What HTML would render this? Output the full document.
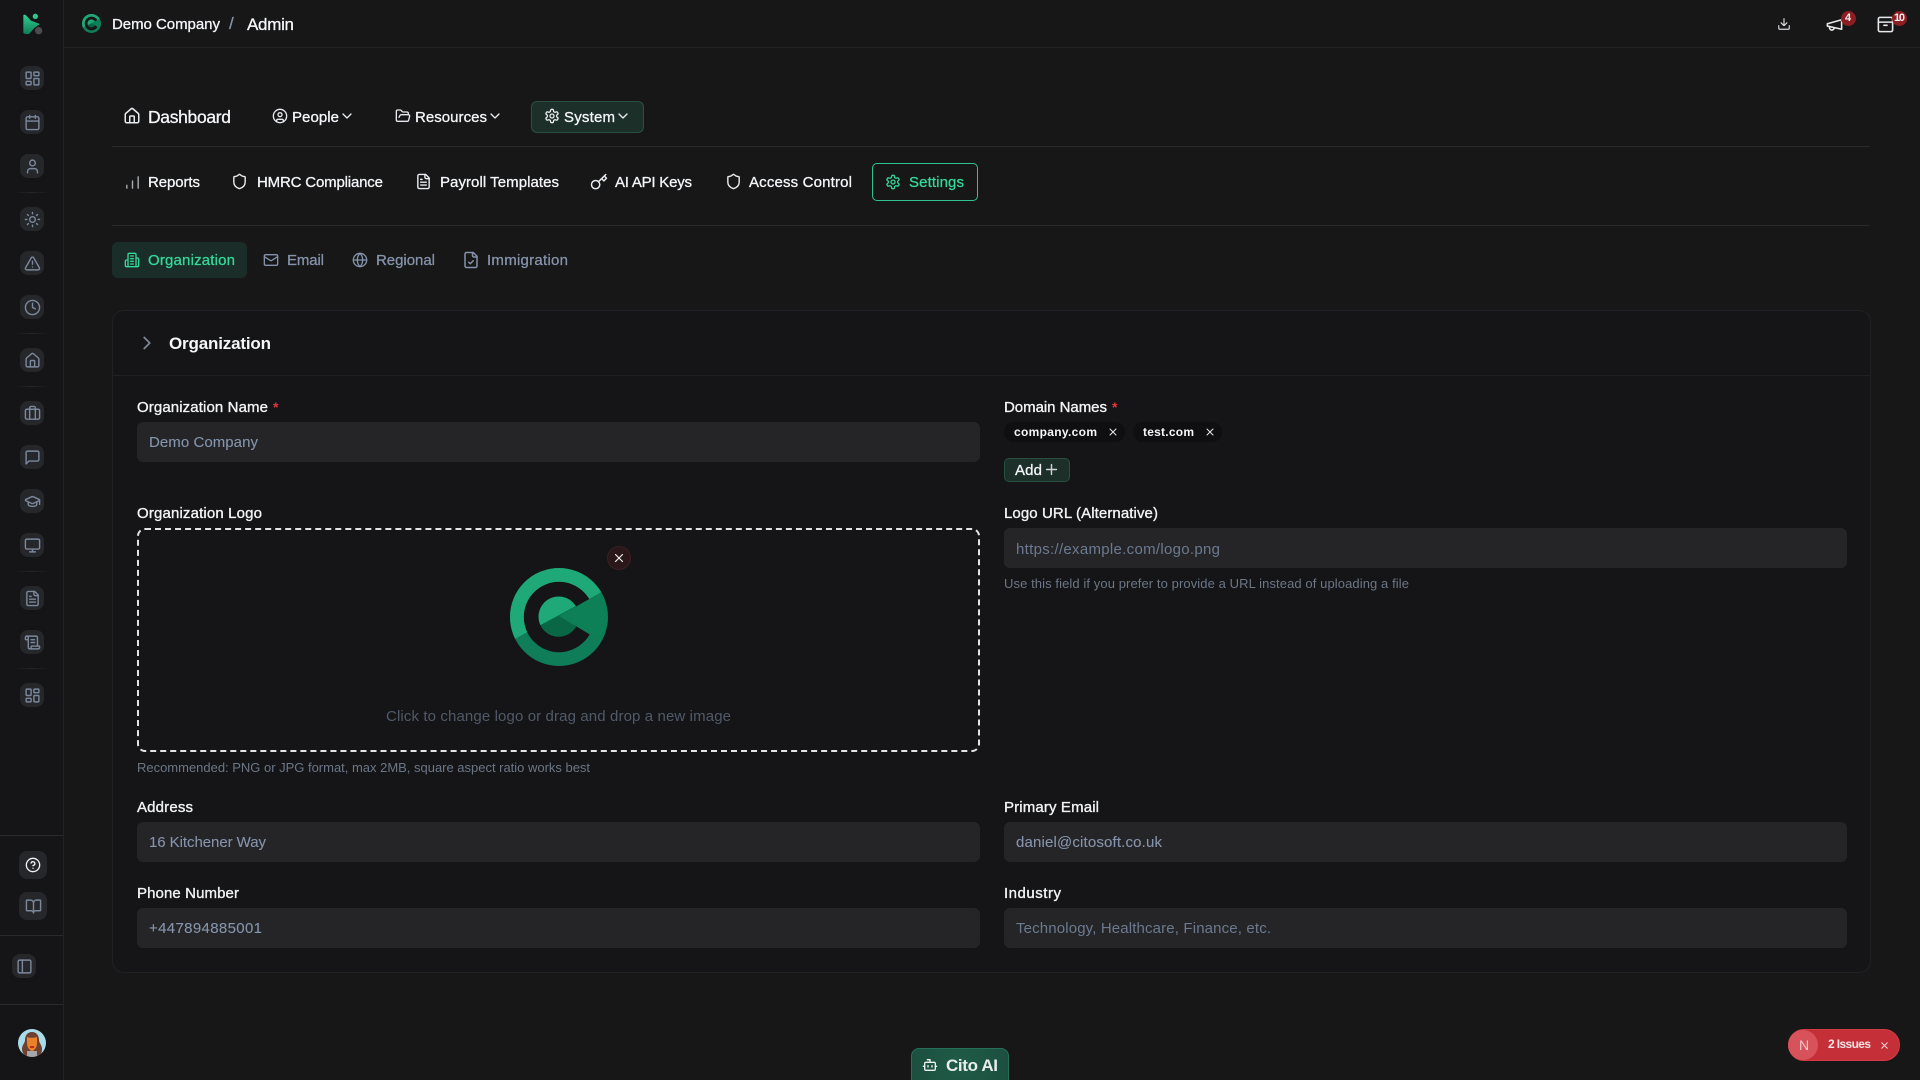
<!DOCTYPE html>
<html lang="en">
<head>
<meta charset="utf-8">
<title>Settings - Organization</title>
<style>
*{box-sizing:border-box}
html,body{margin:0;padding:0;width:1920px;height:1080px;overflow:hidden;background:#171717;font-family:"Liberation Sans",sans-serif;color:#f4f6f9}
.a{position:absolute}
.t{position:absolute;white-space:nowrap;line-height:20px;height:20px;font-size:15px;-webkit-text-stroke:.3px currentColor}
.t:not([style*="font-size"]):not(.h){margin-top:1px}
.w{color:#f4f6f9}.m{color:#8493ab}.g{color:#34d89a}.h{color:#6b7687;font-size:13px;-webkit-text-stroke:0}
.p{color:#6b7a90;-webkit-text-stroke:0}.v{color:#8595ad;-webkit-text-stroke:.1px currentColor}
.l{color:#f1f3f6;-webkit-text-stroke:.35px #f1f3f6}
.b{font-weight:700;-webkit-text-stroke:0}
svg.i{position:absolute;fill:none;stroke:currentColor;stroke-width:2;stroke-linecap:round;stroke-linejoin:round;overflow:visible}
.sb{position:absolute;width:24px;height:24px;left:20px;background:#26272b;border-radius:8px;color:#7b889c}
.sb svg{left:3.5px;top:3.5px;width:17px;height:17px}
.div{position:absolute;left:14px;width:36px;height:1px;background:linear-gradient(90deg,transparent,#252629,transparent)}
.input{position:absolute;background:#252527;border-radius:6px;height:40px;width:843px}
.hr{position:absolute;height:1px;background:#2a2a2c}
.chip{position:absolute;height:20px;top:422px;background:#0f0f11;border-radius:10px}
</style>
</head>
<body>
<svg width="0" height="0" style="position:absolute">
<defs>
<symbol id="home" viewBox="0 0 24 24"><path d="M3 10a2 2 0 0 1 .7-1.5l7-6a2 2 0 0 1 2.6 0l7 6A2 2 0 0 1 21 10v9a2 2 0 0 1-2 2H5a2 2 0 0 1-2-2z"/><path d="M15 21v-8a1 1 0 0 0-1-1h-4a1 1 0 0 0-1 1v8"/></symbol>
<symbol id="dash" viewBox="0 0 24 24"><rect x="3" y="3" width="7" height="9" rx="1"/><rect x="14" y="3" width="7" height="5" rx="1"/><rect x="14" y="12" width="7" height="9" rx="1"/><rect x="3" y="16" width="7" height="5" rx="1"/></symbol>
<symbol id="cal" viewBox="0 0 24 24"><path d="M8 2v4M16 2v4"/><rect x="3" y="4" width="18" height="18" rx="2"/><path d="M3 10h18"/></symbol>
<symbol id="user" viewBox="0 0 24 24"><path d="M19 21v-2a4 4 0 0 0-4-4H9a4 4 0 0 0-4 4v2"/><circle cx="12" cy="7" r="4"/></symbol>
<symbol id="sun" viewBox="0 0 24 24"><circle cx="12" cy="12" r="4"/><path d="M12 2v2M12 20v2M4.9 4.9l1.4 1.4M17.7 17.7l1.4 1.4M2 12h2M20 12h2M6.3 17.7l-1.4 1.4M19.1 4.9l-1.4 1.4"/></symbol>
<symbol id="alert" viewBox="0 0 24 24"><path d="M21.7 18 13.7 4a2 2 0 0 0-3.5 0l-8 14a2 2 0 0 0 1.8 3h16a2 2 0 0 0 1.7-3"/><path d="M12 9v4M12 17h.01"/></symbol>
<symbol id="clock" viewBox="0 0 24 24"><circle cx="12" cy="12" r="10"/><path d="M12 6v6l4 2"/></symbol>
<symbol id="brief" viewBox="0 0 24 24"><path d="M16 20V4a2 2 0 0 0-2-2h-4a2 2 0 0 0-2 2v16"/><rect x="2" y="6" width="20" height="14" rx="2"/></symbol>
<symbol id="msg" viewBox="0 0 24 24"><path d="M21 15a2 2 0 0 1-2 2H7l-4 4V5a2 2 0 0 1 2-2h14a2 2 0 0 1 2 2z"/></symbol>
<symbol id="cap" viewBox="0 0 24 24"><path d="M21.4 10.9a1 1 0 0 0 0-1.8L12.8 5.2a2 2 0 0 0-1.7 0L2.6 9.1a1 1 0 0 0 0 1.8l8.5 3.9a2 2 0 0 0 1.7 0z"/><path d="M22 10v6M6 12.5V16a6 3 0 0 0 12 0v-3.5"/></symbol>
<symbol id="mon" viewBox="0 0 24 24"><rect x="2" y="3" width="20" height="14" rx="2"/><path d="M8 21h8M12 17v4"/></symbol>
<symbol id="file" viewBox="0 0 24 24"><path d="M15 2H6a2 2 0 0 0-2 2v16a2 2 0 0 0 2 2h12a2 2 0 0 0 2-2V7z"/><path d="M14 2v4a2 2 0 0 0 2 2h4M10 9H8M16 13H8M16 17H8"/></symbol>
<symbol id="filec" viewBox="0 0 24 24"><path d="M15 2H6a2 2 0 0 0-2 2v16a2 2 0 0 0 2 2h12a2 2 0 0 0 2-2V7z"/><path d="M14 2v4a2 2 0 0 0 2 2h4M9 15l2 2 4-4"/></symbol>
<symbol id="scroll" viewBox="0 0 24 24"><path d="M15 12h-5M15 8h-5M19 17V5a2 2 0 0 0-2-2H4"/><path d="M8 21h12a2 2 0 0 0 2-2v-1a1 1 0 0 0-1-1H11a1 1 0 0 0-1 1v1a2 2 0 1 1-4 0V5a2 2 0 1 0-4 0v2a1 1 0 0 0 1 1h3"/></symbol>
<symbol id="help" viewBox="0 0 24 24"><circle cx="12" cy="12" r="10"/><path d="M9.1 9a3 3 0 0 1 5.8 1c0 2-3 3-3 3M12 17h.01"/></symbol>
<symbol id="book" viewBox="0 0 24 24"><path d="M12 7v14"/><path d="M3 18a1 1 0 0 1-1-1V4a1 1 0 0 1 1-1h5a4 4 0 0 1 4 4 4 4 0 0 1 4-4h5a1 1 0 0 1 1 1v13a1 1 0 0 1-1 1h-6a3 3 0 0 0-3 3 3 3 0 0 0-3-3z"/></symbol>
<symbol id="panel" viewBox="0 0 24 24"><rect x="3" y="3" width="18" height="18" rx="2"/><path d="M9 3v18"/></symbol>
<symbol id="dl" viewBox="0 0 24 24"><path d="M12 3v12M7 10l5 5 5-5"/><path d="M21 15v4a2 2 0 0 1-2 2H5a2 2 0 0 1-2-2v-4"/></symbol>
<symbol id="mega" viewBox="0 0 24 24"><path d="m3 11 18-5v12L3 14z"/><path d="M11.6 16.8a3 3 0 1 1-5.8-1.6"/></symbol>
<symbol id="box" viewBox="0 0 24 24"><rect x="3" y="3" width="18" height="18" rx="2"/><path d="M3 9h18M10 13h4"/></symbol>
<symbol id="bld" viewBox="0 0 24 24"><path d="M6 22V4a2 2 0 0 1 2-2h8a2 2 0 0 1 2 2v18z"/><path d="M6 12H4a2 2 0 0 0-2 2v6a2 2 0 0 0 2 2h2M18 9h2a2 2 0 0 1 2 2v9a2 2 0 0 1-2 2h-2M10 6h4M10 10h4M10 14h4M10 18h4"/></symbol>
<symbol id="mail" viewBox="0 0 24 24"><rect x="2" y="4" width="20" height="16" rx="2"/><path d="m22 7-8.97 5.7a1.94 1.94 0 0 1-2.06 0L2 7"/></symbol>
<symbol id="globe" viewBox="0 0 24 24"><circle cx="12" cy="12" r="10"/><path d="M12 2a14.5 14.5 0 0 0 0 20 14.5 14.5 0 0 0 0-20M2 12h20"/></symbol>
<symbol id="key" viewBox="0 0 24 24"><circle cx="7.5" cy="15.5" r="5.5"/><path d="m21 2-9.6 9.6M15.5 7.5l3 3L22 7l-3-3"/></symbol>
<symbol id="shield" viewBox="0 0 24 24"><path d="M20 13c0 5-3.5 7.5-7.66 8.95a1 1 0 0 1-.67-.01C7.5 20.5 4 18 4 13V6a1 1 0 0 1 1-1c2 0 4.5-1.2 6.24-2.72a1.17 1.17 0 0 1 1.52 0C14.51 3.81 17 5 19 5a1 1 0 0 1 1 1z"/></symbol>
<symbol id="gear" viewBox="0 0 24 24"><path d="M12.22 2h-.44a2 2 0 0 0-2 2v.18a2 2 0 0 1-1 1.73l-.43.25a2 2 0 0 1-2 0l-.15-.08a2 2 0 0 0-2.73.73l-.22.38a2 2 0 0 0 .73 2.73l.15.1a2 2 0 0 1 1 1.72v.51a2 2 0 0 1-1 1.74l-.15.09a2 2 0 0 0-.73 2.73l.22.38a2 2 0 0 0 2.73.73l.15-.08a2 2 0 0 1 2 0l.43.25a2 2 0 0 1 1 1.73V20a2 2 0 0 0 2 2h.44a2 2 0 0 0 2-2v-.18a2 2 0 0 1 1-1.73l.43-.25a2 2 0 0 1 2 0l.15.08a2 2 0 0 0 2.73-.73l.22-.39a2 2 0 0 0-.73-2.73l-.15-.08a2 2 0 0 1-1-1.74v-.5a2 2 0 0 1 1-1.74l.15-.09a2 2 0 0 0 .73-2.73l-.22-.38a2 2 0 0 0-2.73-.73l-.15.08a2 2 0 0 1-2 0l-.43-.25a2 2 0 0 1-1-1.73V4a2 2 0 0 0-2-2z"/><circle cx="12" cy="12" r="3"/></symbol>
<symbol id="bars" viewBox="0 0 24 24"><path d="M4 20v-4M12 20V10M20 20V4"/></symbol>
<symbol id="cuser" viewBox="0 0 24 24"><circle cx="12" cy="12" r="10"/><circle cx="12" cy="10" r="3"/><path d="M7 20.7V19a2 2 0 0 1 2-2h6a2 2 0 0 1 2 2v1.7"/></symbol>
<symbol id="folder" viewBox="0 0 24 24"><path d="m6 14 1.5-2.9A2 2 0 0 1 9.24 10H20a2 2 0 0 1 1.94 2.5l-1.54 6a2 2 0 0 1-1.95 1.5H4a2 2 0 0 1-2-2V5a2 2 0 0 1 2-2h3.9a2 2 0 0 1 1.69.9l.81 1.2a2 2 0 0 0 1.67.9H18a2 2 0 0 1 2 2v2"/></symbol>
<symbol id="chev" viewBox="0 0 24 24"><path d="m6 9 6 6 6-6"/></symbol>
<symbol id="chevr" viewBox="0 0 24 24"><path d="m9 18 6-6-6-6"/></symbol>
<symbol id="x" viewBox="0 0 24 24"><path d="M18 6 6 18M6 6l12 12"/></symbol>
<symbol id="plus" viewBox="0 0 24 24"><path d="M5 12h14M12 5v14"/></symbol>
<symbol id="bot" viewBox="0 0 24 24"><path d="M12 8V4H8"/><rect x="4" y="8" width="16" height="12" rx="2"/><path d="M2 14h2M20 14h2M15 13v2M9 13v2"/></symbol>
<symbol id="clogo" viewBox="0 0 292 292">
  <defs>
    <clipPath id="upper"><path d="M-30 235 346 33V-20H-30z"/></clipPath>
  </defs>
  <path d="M146 0a146 146 0 1 0 0 292a146 146 0 1 0 0-292zm0 41a105 105 0 1 1 0 210a105 105 0 1 1 0-210z" fill="#0f7d57" fill-rule="evenodd"/>
  <g clip-path="url(#upper)">
    <path d="M146 0a146 146 0 1 0 0 292a146 146 0 1 0 0-292zm0 41a105 105 0 1 1 0 210a105 105 0 1 1 0-210z" fill="#1fa878" fill-rule="evenodd"/>
  </g>
  <circle cx="145" cy="145" r="60" fill="#0a6746"/>
  <g clip-path="url(#upper)"><circle cx="145" cy="145" r="60" fill="#1fa878"/></g>
  <path d="M146 143 271 73A146 146 0 0 1 268 216z" fill="#0d8058"/>
</symbol>
</defs>
</svg>

<!-- Sidebar -->
<div class="a" style="left:0;top:0;width:64px;height:1080px;background:#151517;border-right:1px solid #232326"></div>
<svg class="a" style="left:16px;top:8px" width="32" height="32" viewBox="0 0 96 96">
  <defs><linearGradient id="lg" x1="0" y1="0" x2="0" y2="1"><stop offset="0" stop-color="#2fcf92"/><stop offset="1" stop-color="#0f7d57"/></linearGradient></defs>
  <circle cx="68" cy="68" r="11" fill="#4c4c4e"/>
  <path d="M22 22q0-3 4-2 4 1 8 6l11 12 27 10-17 12-14 16q-3 3-10 2-9-1-9-4z" fill="url(#lg)"/>
  <circle cx="58" cy="25" r="8" fill="#2bc98c"/>
</svg>
<div class="sb" style="top:66px"><svg class="i"><use href="#dash"/></svg></div>
<div class="sb" style="top:110px"><svg class="i"><use href="#cal"/></svg></div>
<div class="sb" style="top:154px"><svg class="i"><use href="#user"/></svg></div>
<div class="div" style="top:192px"></div>
<div class="sb" style="top:207px"><svg class="i"><use href="#sun"/></svg></div>
<div class="sb" style="top:251px"><svg class="i"><use href="#alert"/></svg></div>
<div class="sb" style="top:295px"><svg class="i"><use href="#clock"/></svg></div>
<div class="div" style="top:333px"></div>
<div class="sb" style="top:348px"><svg class="i"><use href="#home"/></svg></div>
<div class="div" style="top:386px"></div>
<div class="sb" style="top:401px"><svg class="i"><use href="#brief"/></svg></div>
<div class="sb" style="top:445px"><svg class="i"><use href="#msg"/></svg></div>
<div class="sb" style="top:489px"><svg class="i"><use href="#cap"/></svg></div>
<div class="sb" style="top:533px"><svg class="i"><use href="#mon"/></svg></div>
<div class="div" style="top:571px"></div>
<div class="sb" style="top:586px"><svg class="i"><use href="#file"/></svg></div>
<div class="sb" style="top:630px"><svg class="i"><use href="#scroll"/></svg></div>
<div class="div" style="top:668px"></div>
<div class="sb" style="top:683px"><svg class="i"><use href="#dash"/></svg></div>
<div class="hr" style="left:0;top:835px;width:63px"></div>
<div class="sb" style="left:19px;top:851px;width:28px;height:28px;color:#f0f2f5"><svg class="i" style="width:16px;height:16px;left:6px;top:6px"><use href="#help"/></svg></div>
<div class="sb" style="left:19px;top:892px;width:28px;height:28px"><svg class="i" style="width:17px;height:17px;left:5.5px;top:5.5px"><use href="#book"/></svg></div>
<div class="hr" style="left:0;top:935px;width:63px"></div>
<div class="sb" style="left:12px;top:954px"><svg class="i"><use href="#panel"/></svg></div>
<div class="hr" style="left:0;top:1004px;width:63px"></div>
<svg class="a" style="left:18px;top:1029px" width="28" height="28" viewBox="0 0 28 28">
  <defs><clipPath id="av"><circle cx="14" cy="14" r="14"/></clipPath></defs>
  <g clip-path="url(#av)"><rect width="28" height="28" fill="#a9dceb"/>
  <path d="M14 3c-5 0-7 4-7 8 0 3-3 5-3 9 0 3 2 6 4 8h12c3-2 4-5 4-8 0-4-3-6-3-9 0-4-2-8-7-8z" fill="#6d4030"/>
  <rect x="9" y="22" width="10" height="6" fill="#a4a8ac"/>
  <path d="M9 8c2 1 7 1 10 0v7c0 3-3 7-5 7s-5-4-5-7z" fill="#e9822a"/>
  <rect x="12" y="17" width="4" height="2" fill="#b8321f"/></g>
</svg>

<!-- Top bar -->
<div class="hr" style="left:64px;top:47px;width:1856px;background:#232326"></div>
<svg class="a" style="left:82px;top:14px" width="19" height="19"><use href="#clogo"/></svg>
<span class="t w" style="font-size:15px;left:112px;top:15px;--w:108">Demo Company</span>
<span class="t m" style="font-size:17px;left:229px;top:14px;--w:5">/</span>
<span class="t w" style="font-size:17px;left:247px;top:15px;--w:47">Admin</span>
<svg class="i" style="left:1777px;top:17px;width:14px;height:14px;color:#d9dbde"><use href="#dl"/></svg>
<svg class="i" style="left:1825px;top:15px;width:19px;height:19px;color:#e6e8ea"><use href="#mega"/></svg>
<div class="a" style="left:1841px;top:11px;width:15px;height:15px;border-radius:50%;background:#8c1d22"></div>
<span class="t b" style="font-size:11px;left:1845px;top:8px;--w:6;color:#f2f2f2">4</span>
<svg class="i" style="left:1876px;top:15px;width:19px;height:19px;color:#e6e8ea"><use href="#box"/></svg>
<div class="a" style="left:1892px;top:11px;width:15px;height:15px;border-radius:50%;background:#8c1d22"></div>
<span class="t b" style="font-size:11px;left:1894px;top:8px;--w:11;color:#f2f2f2">10</span>

<!-- Primary nav -->
<svg class="i" style="left:123px;top:107px;width:18px;height:18px;color:#e8ebef"><use href="#home"/></svg>
<span class="t w" style="font-size:17.5px;left:148px;top:107px;--w:83">Dashboard</span>
<svg class="i" style="left:272px;top:108px;width:16px;height:16px;color:#e8ebef"><use href="#cuser"/></svg>
<span class="t w" style="left:292px;top:107px;--w:47">People</span>
<svg class="i" style="left:339px;top:108px;width:16px;height:16px;color:#e8ebef"><use href="#chev"/></svg>
<svg class="i" style="left:395px;top:108px;width:16px;height:16px;color:#e8ebef"><use href="#folder"/></svg>
<span class="t w" style="left:415px;top:107px;--w:72">Resources</span>
<svg class="i" style="left:487px;top:108px;width:16px;height:16px;color:#e8ebef"><use href="#chev"/></svg>
<div class="a" style="left:531px;top:101px;width:113px;height:32px;background:#1c2f29;border:1px solid #28503f;border-radius:6px"></div>
<svg class="i" style="left:544px;top:108px;width:16px;height:16px;color:#e8ebef"><use href="#gear"/></svg>
<span class="t w" style="left:564px;top:107px;--w:51">System</span>
<svg class="i" style="left:615px;top:108px;width:16px;height:16px;color:#e8ebef"><use href="#chev"/></svg>
<div class="hr" style="left:112px;top:146px;width:1758px"></div>

<!-- Secondary nav -->
<svg class="i" style="left:124px;top:174px;width:17px;height:17px;color:#a5a8ad"><use href="#bars"/></svg>
<span class="t w" style="left:148px;top:172px;--w:52">Reports</span>
<svg class="i" style="left:231px;top:173px;width:17px;height:17px;color:#e8ebef"><use href="#shield"/></svg>
<span class="t w" style="left:257px;top:172px;--w:126">HMRC Compliance</span>
<svg class="i" style="left:415px;top:173px;width:17px;height:17px;color:#e8ebef"><use href="#file"/></svg>
<span class="t w" style="left:440px;top:172px;--w:119">Payroll Templates</span>
<svg class="i" style="left:590px;top:173px;width:18px;height:18px;color:#e8ebef"><use href="#key"/></svg>
<span class="t w" style="left:615px;top:172px;--w:77">AI API Keys</span>
<svg class="i" style="left:725px;top:173px;width:17px;height:17px;color:#e8ebef"><use href="#shield"/></svg>
<span class="t w" style="left:749px;top:172px;--w:103">Access Control</span>
<div class="a" style="left:872px;top:163px;width:106px;height:38px;border:1px solid #2fc48d;border-radius:5px"></div>
<svg class="i" style="left:885px;top:174px;width:16px;height:16px;color:#34d89a"><use href="#gear"/></svg>
<span class="t g" style="left:909px;top:172px;--w:55">Settings</span>
<div class="hr" style="left:112px;top:225px;width:1758px"></div>

<!-- Tabs -->
<div class="a" style="left:112px;top:242px;width:135px;height:36px;background:#1b2d28;border-radius:6px"></div>
<svg class="i" style="left:124px;top:252px;width:16px;height:16px;color:#34d89a"><use href="#bld"/></svg>
<span class="t g" style="left:148px;top:250px;--w:87">Organization</span>
<svg class="i" style="left:263px;top:252px;width:16px;height:16px;color:#8493ab"><use href="#mail"/></svg>
<span class="t m" style="left:287px;top:250px;--w:37">Email</span>
<svg class="i" style="left:352px;top:252px;width:16px;height:16px;color:#8493ab"><use href="#globe"/></svg>
<span class="t m" style="left:376px;top:250px;--w:59">Regional</span>
<svg class="i" style="left:462px;top:251px;width:18px;height:18px;color:#8493ab"><use href="#filec"/></svg>
<span class="t m" style="left:487px;top:250px;--w:81">Immigration</span>

<!-- Card -->
<div class="a" style="left:112px;top:310px;width:1759px;height:663px;background:#151517;border:1px solid #202124;border-radius:12px"></div>
<div class="hr" style="left:113px;top:375px;width:1757px;background:#202124"></div>
<svg class="i" style="left:136px;top:332px;width:22px;height:22px;color:#7b8494"><use href="#chevr"/></svg>
<span class="t b w" style="font-size:17px;left:169px;top:334px;--w:102">Organization</span>

<!-- Left column -->
<span class="t l" style="left:137px;top:397px;--w:131">Organization Name</span>
<span class="t b" style="left:273px;top:397px;color:#e0383e;font-size:14px">*</span>
<div class="input" style="left:137px;top:422px"></div>
<span class="t v" style="left:149px;top:432px;--w:109">Demo Company</span>

<span class="t l" style="left:137px;top:503px;--w:125">Organization Logo</span>
<div class="a" style="left:137px;top:528px;width:843px;height:224px;border:2px dashed #e2e4e7;border-radius:8px"></div>
<svg class="a" style="left:510px;top:568px" width="98" height="98"><use href="#clogo"/></svg>
<div class="a" style="left:607px;top:546px;width:24px;height:24px;border-radius:50%;background:#2b1619;border:1px solid #3a2024"></div>
<svg class="i" style="left:612px;top:551px;width:14px;height:14px;color:#f1f1f1"><use href="#x"/></svg>
<span class="t" style="left:386px;top:706px;--w:345;color:#505a69;-webkit-text-stroke:0">Click to change logo or drag and drop a new image</span>
<span class="t h" style="left:137px;top:758px;--w:453">Recommended: PNG or JPG format, max 2MB, square aspect ratio works best</span>

<span class="t l" style="left:137px;top:797px;--w:56">Address</span>
<div class="input" style="left:137px;top:822px"></div>
<span class="t v" style="left:149px;top:832px;--w:117">16 Kitchener Way</span>

<span class="t l" style="left:137px;top:883px;--w:102">Phone Number</span>
<div class="input" style="left:137px;top:908px"></div>
<span class="t v" style="left:149px;top:918px;--w:113">+447894885001</span>

<!-- Right column -->
<span class="t l" style="left:1004px;top:397px;--w:103">Domain Names</span>
<span class="t b" style="left:1112px;top:397px;color:#e0383e;font-size:14px">*</span>
<div class="chip" style="left:1004px;width:121px"></div>
<span class="t b" style="font-size:12px;left:1014px;top:422px;--w:83">company.com</span>
<svg class="i" style="left:1107px;top:426px;width:12px;height:12px;color:#e6e6e6"><use href="#x"/></svg>
<div class="chip" style="left:1133px;width:89px"></div>
<span class="t b" style="font-size:12px;left:1143px;top:422px;--w:51">test.com</span>
<svg class="i" style="left:1204px;top:426px;width:12px;height:12px;color:#e6e6e6"><use href="#x"/></svg>
<div class="a" style="left:1004px;top:458px;width:66px;height:24px;background:#1c2f29;border:1px solid #28503f;border-radius:5px"></div>
<span class="t w" style="left:1015px;top:460px;--w:27">Add</span>
<svg class="i" style="left:1043px;top:461px;width:17px;height:17px;color:#cfd3d6"><use href="#plus"/></svg>

<span class="t l" style="left:1004px;top:503px;--w:154">Logo URL (Alternative)</span>
<div class="input" style="left:1004px;top:528px"></div>
<span class="t p" style="left:1016px;top:539px;--w:204">https://example.com/logo.png</span>
<span class="t h" style="left:1004px;top:574px;--w:405">Use this field if you prefer to provide a URL instead of uploading a file</span>

<span class="t l" style="left:1004px;top:797px;--w:95">Primary Email</span>
<div class="input" style="left:1004px;top:822px"></div>
<span class="t v" style="left:1016px;top:832px;--w:146">daniel@citosoft.co.uk</span>

<span class="t l" style="left:1004px;top:883px;--w:57">Industry</span>
<div class="input" style="left:1004px;top:908px"></div>
<span class="t p" style="left:1016px;top:918px;--w:255">Technology, Healthcare, Finance, etc.</span>

<!-- Cito AI -->
<div class="a" style="left:911px;top:1048px;width:98px;height:32px;background:radial-gradient(circle at 50% 50%,#1f5c48,#1c4e3e);border:1px solid #26705a;border-bottom:0;border-radius:8px 8px 0 0"></div>
<svg class="i" style="left:922px;top:1057px;width:16px;height:16px;color:#eef2f0"><use href="#bot"/></svg>
<span class="t b" style="font-size:17px;left:946px;top:1056px;--w:52;color:#e9eeec">Cito AI</span>

<!-- Issues -->
<div class="a" style="left:1788px;top:1029px;width:112px;height:32px;background:#c52f38;border:1px solid #d23b44;border-radius:16px"></div>
<div class="a" style="left:1788px;top:1030px;width:30px;height:30px;background:#d7525a;border-radius:50%"></div>
<span class="t" style="font-size:14px;left:1799px;top:1035px;--w:10;color:#f2c9cb;-webkit-text-stroke:0">N</span>
<span class="t b" style="font-size:12px;left:1828px;top:1034px;--w:43;color:#f6e4e5">2 Issues</span>
<svg class="i" style="left:1879px;top:1040px;width:11px;height:11px;color:#f3dfe0"><use href="#x"/></svg>

<script>
document.querySelectorAll('.t').forEach(function(e){
  var w=parseFloat(getComputedStyle(e).getPropertyValue('--w'));
  if(!w)return;
  var n=e.textContent.length;
  var m=e.getBoundingClientRect().width;
  if(n>1)e.style.letterSpacing=((w-m)/(n-1)).toFixed(3)+'px';
});
</script>
</body>
</html>
